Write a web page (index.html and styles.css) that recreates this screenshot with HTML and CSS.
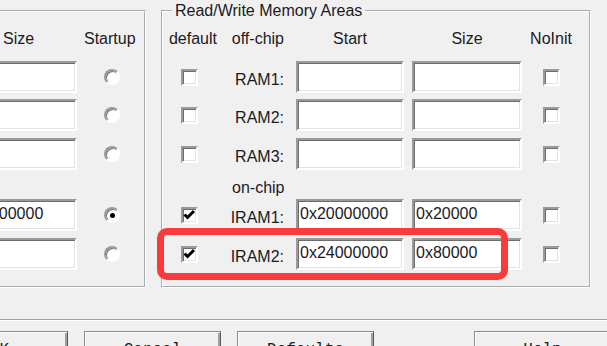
FILE: index.html
```html
<!DOCTYPE html>
<html lang="en">
<head>
    <meta charset="UTF-8">
    <title>Options for Target</title>
    <link rel="stylesheet" href="styles.css">
</head>
<body>
    <div class="dialog">
        <div class="groups">
            <!-- read-only memory areas (mostly off screen) -->
            <fieldset class="group group-rom">
                <div class="grid grid-rom">
                    <div class="head head-size">Size</div>
                    <div class="head">Startup</div>

                    <div class="field"></div>
                    <div class="opt"><span class="radio"></span></div>
                    <div class="field"></div>
                    <div class="opt"><span class="radio"></span></div>
                    <div class="field"></div>
                    <div class="opt"><span class="radio"></span></div>

                    <div class="skip"></div>

                    <div class="field">0x200000</div>
                    <div class="opt"><span class="radio on"></span></div>
                    <div class="field"></div>
                    <div class="opt"><span class="radio"></span></div>
                </div>
            </fieldset>

            <fieldset class="group group-ram">
                <legend>Read/Write Memory Areas</legend>
                <div class="grid grid-ram">
                    <div class="head">default</div>
                    <div class="head head-label">off-chip</div>
                    <div class="head">Start</div>
                    <div class="head">Size</div>
                    <div class="head">NoInit</div>

                    <div class="cell-def"><span class="check"></span></div>
                    <div class="label">RAM1:</div>
                    <div class="field"></div>
                    <div class="field"></div>
                    <div class="cell-noinit"><span class="check"></span></div>

                    <div class="cell-def"><span class="check"></span></div>
                    <div class="label">RAM2:</div>
                    <div class="field"></div>
                    <div class="field"></div>
                    <div class="cell-noinit"><span class="check"></span></div>

                    <div class="cell-def"><span class="check"></span></div>
                    <div class="label">RAM3:</div>
                    <div class="field"></div>
                    <div class="field"></div>
                    <div class="cell-noinit"><span class="check"></span></div>

                    <div class="subhead">on-chip</div>

                    <div class="cell-def"><span class="check"><svg width="13" height="13" viewBox="0 0 13 13"><polyline points="1.5,5.5 4.5,8.5 11,2" fill="none" stroke="#000" stroke-width="3"/></svg></span></div>
                    <div class="label">IRAM1:</div>
                    <div class="field">0x20000000</div>
                    <div class="field">0x20000</div>
                    <div class="cell-noinit"><span class="check"></span></div>

                    <div class="cell-def"><span class="check"><svg width="13" height="13" viewBox="0 0 13 13"><polyline points="1.5,5.5 4.5,8.5 11,2" fill="none" stroke="#000" stroke-width="3"/></svg></span></div>
                    <div class="label">IRAM2:</div>
                    <div class="field">0x24000000</div>
                    <div class="field">0x80000</div>
                    <div class="cell-noinit"><span class="check"></span></div>
                </div>
            </fieldset>
        </div>

        <div class="separator"></div>

        <div class="buttons">
            <button class="btn">OK</button>
            <button class="btn">Cancel</button>
            <button class="btn">Defaults</button>
            <button class="btn btn-help">Help</button>
        </div>

        <!-- red annotation frame -->
        <div class="highlight"></div>
    </div>
</body>
</html>
```

FILE: styles.css
```css
body {
    margin: 0;
    background: #f0f0f0;
    font-family: "Liberation Sans", Arial, sans-serif;
    font-size: 16px;
    color: #1a1a24;
    overflow: hidden;
}
.dialog {
    position: relative;
    width: 607px;
    height: 346px;
    overflow: hidden;
}
.groups {
    display: flex;
    align-items: flex-start;
    gap: 15px;
    margin-left: -41px;
}
.group {
    margin: 0;
    min-width: 0;
    border: 2px groove #fff;
}
.group-rom {
    margin-top: 10px;
    padding: 16px 4px 16px 8px;
}
.group-ram {
    padding: 6px 17px 16px 4px;
}
legend {
    padding: 0 3px;
    margin-left: 5px;
    line-height: 22px;
}
.grid {
    display: grid;
    grid-template-rows: 33px 38px 39px 39px 22px 39px 32px;
    align-items: start;
}
.grid-rom {
    grid-template-columns: 108px 56px;
    column-gap: 7px;
}
.grid-ram {
    grid-template-columns: 52px 61px 108px 110px 42px;
    column-gap: 8px;
}
.head {
    line-height: 22px;
    text-align: center;
    white-space: nowrap;
}
.grid-rom .head {
    text-align: left;
}
.head-size {
    padding-left: 34px;
}
.head-label {
    text-align: right;
    padding-right: 4px;
}
.skip {
    grid-column: 1 / -1;
}
.subhead {
    grid-column: 2 / -1;
    line-height: 22px;
    padding-left: 5px;
}
.label {
    height: 32px;
    box-sizing: border-box;
    display: flex;
    align-items: center;
    justify-content: flex-end;
    padding: 5px 4px 0 0;
    white-space: nowrap;
}
.field {
    height: 32px;
    box-sizing: border-box;
    display: flex;
    align-items: center;
    padding: 0 2px 3px;
    background: #fff;
    border: 2px solid;
    border-color: #9a9a9a #fff #fff #9a9a9a;
    box-shadow: inset 1px 1px #6d6d6d, inset -1px -1px #e3e3e3;
    white-space: nowrap;
    overflow: hidden;
}
.opt {
    height: 32px;
    display: flex;
    align-items: center;
    padding-left: 20px;
}
.radio {
    width: 16px;
    height: 16px;
    box-sizing: border-box;
    display: flex;
    align-items: center;
    justify-content: center;
    border-radius: 50%;
    background: #fff;
    border: 2px solid;
    border-color: #9a9a9a #fff #fff #9a9a9a;
    box-shadow: inset 1px 1px #6d6d6d;
}
.radio.on::after {
    content: "";
    width: 5px;
    height: 5px;
    border-radius: 50%;
    background: #000;
}
.cell-def, .cell-noinit {
    height: 32px;
    display: flex;
    align-items: center;
}
.cell-def {
    padding-left: 14px;
}
.cell-noinit {
    justify-content: center;
}
.check {
    width: 17px;
    height: 17px;
    box-sizing: border-box;
    display: block;
    background: #fff;
    border: 2px solid;
    border-color: #9a9a9a #fff #fff #9a9a9a;
    box-shadow: inset 1px 1px #6d6d6d, inset -1px -1px #e3e3e3;
}
.check svg {
    display: block;
}
.separator {
    margin-top: 31px;
    border-top: 1px solid #a0a0a0;
    border-bottom: 1px solid #fff;
}
.buttons {
    display: flex;
    gap: 16px;
    margin-top: 10px;
    margin-left: -69px;
}
.btn {
    flex: none;
    width: 137px;
    height: 34px;
    box-sizing: border-box;
    padding: 3px 0 0;
    margin: 0;
    font-family: "Liberation Mono", "Courier New", monospace;
    font-size: 16px;
    line-height: 20px;
    color: #1a1a24;
    text-align: center;
    vertical-align: top;
    background: #f0f0f0;
    border: 1px solid #8c8c8c;
    border-right-color: #5a5a5a;
    box-shadow: inset 1px 1px #fff, inset -2px 0 #a0a0a0;
}
.btn-help {
    margin-left: 84px;
}
.highlight {
    position: absolute;
    left: 157px;
    top: 228px;
    width: 351px;
    height: 52px;
    box-sizing: border-box;
    border: 7px solid #fb3b3b;
    border-radius: 10px;
}
```
